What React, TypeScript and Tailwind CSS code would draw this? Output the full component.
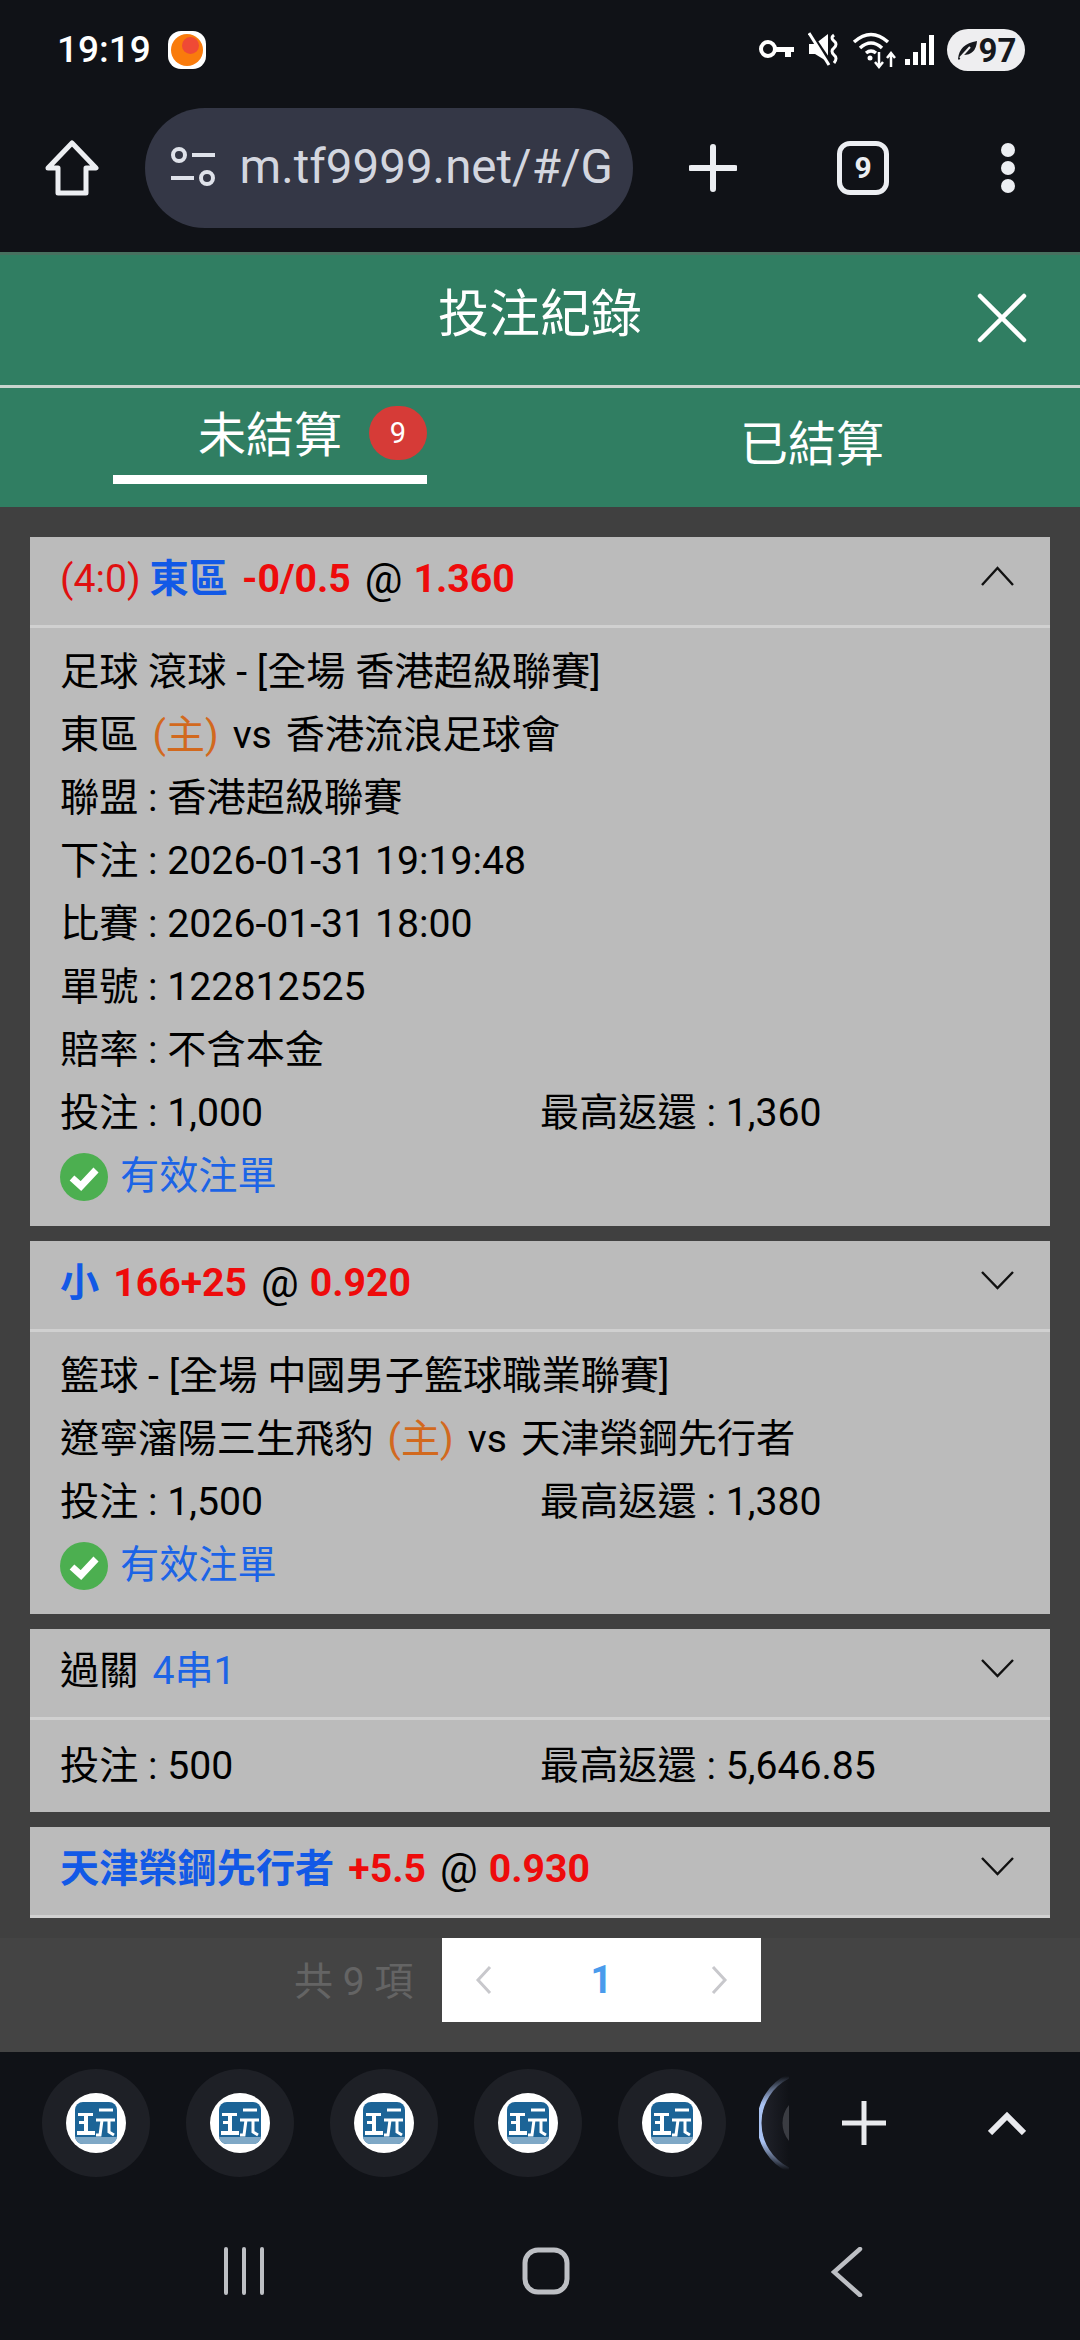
const FONT = "font-['Roboto','Noto_Sans_CJK_TC',sans-serif]";

function StatusIcons() {
  return (
    <div className="flex items-center">
      <svg width="38" height="24" viewBox="0 0 38 24" fill="none" stroke="white" strokeWidth="4" className="mr-[12px]">
        <circle cx="10" cy="11" r="7" />
        <path d="M17 9 H36 V14 H33 V19 H27 V14 H17" fill="white" stroke="none" />
      </svg>
      <svg width="32" height="36" viewBox="0 0 32 36" className="mr-[12px]">
        <path d="M1 12 H7 L20 2 V30 L7 22 H1 Z" fill="white" />
        <path d="M3 2 L22 30" stroke="#101217" strokeWidth="4" />
        <path d="M1 1 L21 33" stroke="white" strokeWidth="3" />
        <path d="M26 3 Q22 6 26 9 Q30 12 26 16 Q22 19 26 23 Q30 26 26 31" stroke="white" strokeWidth="3" fill="none" />
      </svg>
      <svg width="46" height="38" viewBox="0 0 46 38" fill="none" stroke="white" strokeWidth="3.5" className="mr-[7px]">
        <path d="M2 11 Q19 -4 36 11" />
        <path d="M8 17 Q19 7 30 17" />
        <path d="M14 22 Q19 18 24 22" />
        <circle cx="18" cy="27" r="2.5" fill="white" stroke="none" />
        <path d="M27 21 V36 M23 31 L27 36 L31 31" strokeWidth="2.5" />
        <path d="M39 36 V22 M35 27 L39 22 L43 27" strokeWidth="2.5" />
      </svg>
      <svg width="30" height="32" viewBox="0 0 30 32" fill="white" className="mr-[12px]">
        <rect x="0" y="25" width="5" height="6" />
        <rect x="8" y="18" width="5" height="13" />
        <rect x="16" y="9" width="5" height="22" />
        <rect x="24" y="1" width="5" height="30" />
      </svg>
      <div className="flex h-[42px] w-[78px] items-center justify-center rounded-full bg-[#eeeef0] text-[33px] leading-none font-bold text-[#16181d]">
        <svg width="22" height="22" viewBox="0 0 22 22" className="mr-[1px]">
          <path d="M2 20 Q3 5 21 2 Q20 16 7 16 L3 21 Z" fill="#16181d" />
          <path d="M4 19 L14 8" stroke="#eeeef0" strokeWidth="2" />
        </svg>
        97
      </div>
    </div>
  );
}

function BrowserBar() {
  return (
    <div className="flex h-[156px] items-start pt-[12px]">
      <div className="flex h-[120px] w-[145px] items-center justify-center">
        <svg width="54" height="56" viewBox="0 0 54 56" fill="none" stroke="#eceef2" strokeWidth="5" strokeLinejoin="round">
          <path d="M27 3 L51 28 H41 V53 H13 V28 H3 Z" />
        </svg>
      </div>
      <div className="flex h-[120px] w-[490px] items-center rounded-full bg-[#343746] pl-[25px]">
        <svg width="46" height="42" viewBox="0 0 46 42" fill="none" stroke="#dfe2ea" strokeWidth="4">
          <circle cx="9" cy="8" r="6" />
          <path d="M22 8 H45" />
          <path d="M1 31 H24" />
          <circle cx="37" cy="31" r="6" />
        </svg>
        <span className="ml-[24px] text-[47.5px] leading-none text-[#d3d6df]">m.tf9999.net/#/G</span>
      </div>
      <div className="flex h-[120px] w-[160px] items-center justify-center">
        <svg width="48" height="48" viewBox="0 0 48 48" stroke="#eceef2" strokeWidth="6" strokeLinecap="round">
          <path d="M24 3 V45 M2 24 H46" />
        </svg>
      </div>
      <div className="flex h-[120px] w-[141px] items-center justify-center">
        <div className="flex h-[54px] w-[52px] items-center justify-center rounded-[13px] border-[5px] border-[#eceef2] text-[30px] leading-none font-bold text-[#eceef2]">9</div>
      </div>
      <div className="flex h-[120px] w-[147px] flex-col items-center justify-center gap-[4px] pl-[3px]">
        <div className="size-[14px] rounded-full bg-[#eceef2]" />
        <div className="size-[14px] rounded-full bg-[#eceef2]" />
        <div className="size-[14px] rounded-full bg-[#eceef2]" />
      </div>
    </div>
  );
}

function Chevron({ up }: { up?: boolean }) {
  return (
    <svg width="33" height="20" viewBox="0 0 33 20" fill="none" stroke="#111" strokeWidth="2.4">
      <path d={up ? 'M1 19 L16.5 2 L32 19' : 'M1 2 L16.5 18 L32 2'} />
    </svg>
  );
}

function CardHeader({ up, children }: { up?: boolean; children: React.ReactNode }) {
  return (
    <div className="flex h-[91px] items-center justify-between border-b-[3px] border-[#d0d0d0] pr-[36px] pb-[3px] pl-[30px]">
      <div className="flex items-center gap-[14px] whitespace-pre">{children}</div>
      <div className="mb-[8px]"><Chevron up={up} /></div>
    </div>
  );
}

function Row({ children }: { children: React.ReactNode }) {
  return <div className="flex h-[63px] gap-[14px] leading-[63px] whitespace-pre text-black">{children}</div>;
}

function Amounts({ bet, max }: { bet: string; max: string }) {
  return (
    <div className="grid h-[63px] grid-cols-2 leading-[63px] whitespace-pre text-black">
      <span>投注 : {bet}</span>
      <span>最高返還 : {max}</span>
    </div>
  );
}

function ValidBet() {
  return (
    <div className="flex h-[63px] items-center text-[#1c64e6]">
      <svg width="48" height="48" viewBox="0 0 48 48" className="mr-[12px]">
        <circle cx="24" cy="24" r="24" fill="#4caf50" />
        <path d="M12 25 L21 33 L36 17" fill="none" stroke="white" strokeWidth="7" />
      </svg>
      有效注單
    </div>
  );
}

const Blue = ({ children }: { children: React.ReactNode }) => <span className="font-bold text-[#1259e6]">{children}</span>;
const Red = ({ children }: { children: React.ReactNode }) => <span className="font-bold text-[#ee0b0b]">{children}</span>;
const At = () => <span className="-mr-[3px] text-[42px] leading-none">@</span>;
const Home = () => <span className="text-[#d2691e]">(主)</span>;

function OddsCards() {
  return (
    <div className="flex h-[1431px] flex-col gap-[15px] px-[30px] pt-[30px] text-[39.2px] text-black">
      <div className="h-[689px] bg-[#bbbbbb]">
        <CardHeader up>
          <span className="-mr-[5px] text-[#e01010]">(4:0)</span>
          <Blue>東區</Blue>
          <Red>-0/0.5</Red>
          <At />
          <Red>1.360</Red>
        </CardHeader>
        <div className="px-[30px] pt-[13px]">
          <Row>足球 滾球 - [全場 香港超級聯賽]</Row>
          <Row><span>東區</span><Home /><span>vs</span><span>香港流浪足球會</span></Row>
          <Row>聯盟 : 香港超級聯賽</Row>
          <Row>下注 : 2026-01-31 19:19:48</Row>
          <Row>比賽 : 2026-01-31 18:00</Row>
          <Row>單號 : 122812525</Row>
          <Row>賠率 : 不含本金</Row>
          <Amounts bet="1,000" max="1,360" />
          <ValidBet />
        </div>
      </div>
      <div className="h-[373px] bg-[#bbbbbb]">
        <CardHeader>
          <Blue>小</Blue>
          <Red>166+25</Red>
          <At />
          <Red>0.920</Red>
        </CardHeader>
        <div className="px-[30px] pt-[13px]">
          <Row>籃球 - [全場 中國男子籃球職業聯賽]</Row>
          <Row><span>遼寧瀋陽三生飛豹</span><Home /><span>vs</span><span>天津榮鋼先行者</span></Row>
          <Amounts bet="1,500" max="1,380" />
          <ValidBet />
        </div>
      </div>
      <div className="h-[183px] bg-[#bbbbbb]">
        <CardHeader>
          <span>過關</span>
          <span className="text-[#1c64e6]">4串1</span>
        </CardHeader>
        <div className="px-[30px] pt-[15px]">
          <Amounts bet="500" max="5,646.85" />
        </div>
      </div>
      <div className="h-[90px] bg-[#bbbbbb]">
        <CardHeader>
          <Blue>天津榮鋼先行者</Blue>
          <Red>+5.5</Red>
          <At />
          <Red>0.930</Red>
        </CardHeader>
      </div>
    </div>
  );
}

function Pagination() {
  return (
    <div className="flex h-[114px] items-start bg-[#444444] pl-[294px]">
      <span className="mt-[22px] w-[148px] text-[39px] leading-[44px] whitespace-pre text-[#646464]">共 9 項</span>
      <div className="flex h-[84px] w-[319px] items-center justify-between bg-white px-[33px]">
        <svg width="18" height="30" viewBox="0 0 18 30" fill="none" stroke="#c8c8cc" strokeWidth="3"><path d="M15 2 L3 15 L15 28" /></svg>
        <span className="text-[38px] leading-none font-bold text-[#4a9bec]">1</span>
        <svg width="18" height="30" viewBox="0 0 18 30" fill="none" stroke="#c8c8cc" strokeWidth="3"><path d="M3 2 L15 15 L3 28" /></svg>
      </div>
    </div>
  );
}

function TabLogo() {
  return (
    <div className="flex size-[108px] items-center justify-center rounded-full bg-[#1e2026]">
      <svg width="60" height="60" viewBox="0 0 60 60">
        <circle cx="30" cy="30" r="30" fill="white" />
        <rect x="9" y="9" width="42" height="42" rx="8" fill="#1c6497" />
        <path d="M9 44 H51 V43 A8 8 0 0 1 43 51 H17 A8 8 0 0 1 9 43 Z" fill="#7fa8c6" />
        <path d="M12 20 H27 V23 H22 V38 H29 V42 H11 V38 H18 V31 H13 V28 H18 V23 H12 Z" fill="white" />
        <path d="M33 17 H47 M30 27 H49 M36 27 L34 42 H30 M43 27 V39 L48 42" stroke="white" strokeWidth="3" fill="none" />
      </svg>
    </div>
  );
}

function GhostTab() {
  return (
    <svg width="30" height="108" viewBox="0 0 30 108" fill="none" className="ml-[33px]">
      <defs>
        <linearGradient id="ghostFade" x1="0" y1="0" x2="0" y2="1">
          <stop offset="0" stopColor="#a9c2f2" stopOpacity="0" />
          <stop offset="0.3" stopColor="#a9c2f2" />
          <stop offset="0.7" stopColor="#a9c2f2" />
          <stop offset="1" stopColor="#a9c2f2" stopOpacity="0" />
        </linearGradient>
        <linearGradient id="ghostFill" x1="0" y1="0" x2="1" y2="0">
          <stop offset="0" stopColor="#22242c" />
          <stop offset="1" stopColor="#101217" />
        </linearGradient>
      </defs>
      <path d="M30 7 A52 52 0 0 0 30 101 Z" fill="url(#ghostFill)" />
      <path d="M30 7 A52 52 0 0 0 30 101" stroke="url(#ghostFade)" strokeWidth="4.5" />
      <path d="M30 36 A28 28 0 0 0 30 72 Z" fill="#3a3c42" />
    </svg>
  );
}

function BottomBars() {
  return (
    <div className="flex-1 bg-[#101217]">
      <div className="flex h-[142px] items-center pl-[42px]">
        <div className="flex gap-[36px]">
          <TabLogo />
          <TabLogo />
          <TabLogo />
          <TabLogo />
          <TabLogo />
        </div>
        <GhostTab />
        <svg width="44" height="44" viewBox="0 0 44 44" stroke="#e9eaee" strokeWidth="5" className="ml-[53px]">
          <path d="M22 0 V44 M0 22 H44" />
        </svg>
        <svg width="38" height="24" viewBox="0 0 38 24" fill="none" stroke="#e9eaee" strokeWidth="6" className="ml-[102px]">
          <path d="M2 22 L19 5 L36 22" />
        </svg>
      </div>
      <div className="flex h-[146px] items-start pt-[53px]">
        <svg width="42" height="48" viewBox="0 0 42 48" stroke="#bdbfc4" strokeWidth="4" strokeLinecap="round" className="ml-[223px]">
          <path d="M3 2 V46 M21 2 V46 M39 2 V46" />
        </svg>
        <svg width="48" height="48" viewBox="0 0 48 48" fill="none" stroke="#bdbfc4" strokeWidth="5" className="ml-[257px]">
          <rect x="3" y="3" width="42" height="42" rx="13" />
        </svg>
        <svg width="32" height="50" viewBox="0 0 32 50" fill="none" stroke="#bdbfc4" strokeWidth="4.5" strokeLinecap="round" className="ml-[261px]">
          <path d="M29 2 L3 25 L29 48" />
        </svg>
      </div>
    </div>
  );
}

export default function App() {
  return (
    <div className={`${FONT} flex h-[2340px] w-[1080px] flex-col overflow-hidden bg-[#404040]`}>
      <div className="bg-[#101217]">
        <div className="flex h-[96px] items-center justify-between pt-[4px] pr-[55px] pl-[57px]">
          <div className="flex items-center text-[37px] font-medium text-white">
            19:19
            <div className="ml-[17px] flex size-[38px] items-center justify-center rounded-[13px] bg-white">
              <div className="relative size-[32px] rounded-full bg-[#f97b0c]">
                <div className="absolute top-[3px] right-[4px] size-[17px] rounded-full bg-[#ef4a35]" />
              </div>
            </div>
          </div>
          <StatusIcons />
        </div>
        <BrowserBar />
      </div>

      {/* green title + tabs */}
      <div className="h-[255px] border-t-[3px] border-[#47705f] bg-[#307e62] text-white">
        <div className="flex h-[133px] items-center justify-center border-b-[3px] border-[#c8d4ce] pb-[12px]">
          <span className="text-[51px] leading-none">投注紀錄</span>
          <svg width="50" height="50" viewBox="0 0 50 50" stroke="white" strokeWidth="4.5" strokeLinecap="round" className="absolute top-[293px] left-[977px]">
            <path d="M3 3 L47 47 M47 3 L3 47" />
          </svg>
        </div>
        <div className="flex h-[119px] pl-[113px]">
          <div className="flex h-[96px] w-[314px] items-center border-b-[9px] border-white pt-[9px]">
            <span className="ml-[85px] text-[48px] leading-none">未結算</span>
            <span className="mb-[6px] ml-[27px] flex h-[54px] w-[58px] shrink-0 items-center justify-center rounded-full bg-[#d63b37] text-[29px] leading-none">9</span>
          </div>
          <span className="mt-[33px] ml-[313px] text-[48px] leading-[48px]">已結算</span>
        </div>
      </div>

      <OddsCards />
      <Pagination />
      <BottomBars />
    </div>
  );
}
